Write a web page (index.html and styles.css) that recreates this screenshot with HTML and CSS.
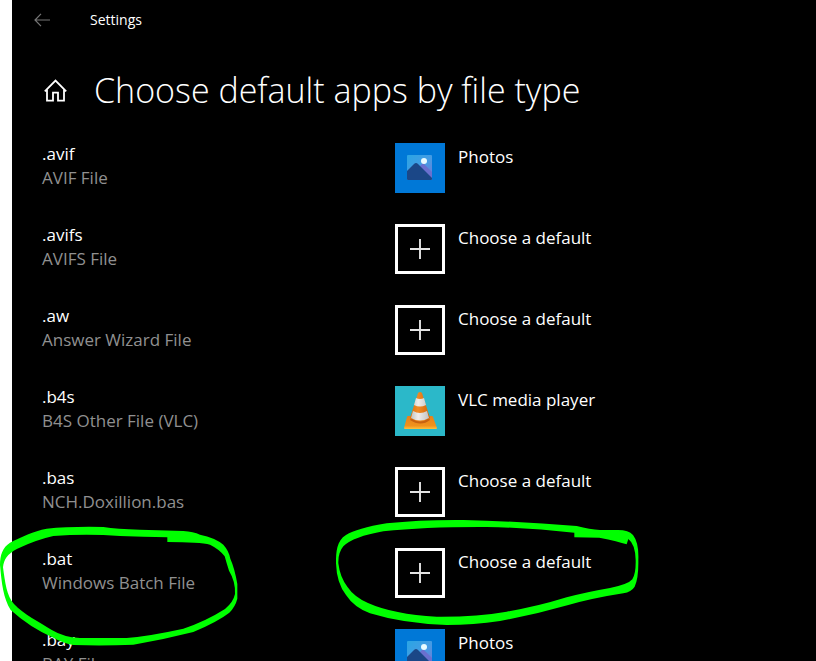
FILE: index.html
```html
<!DOCTYPE html>
<html lang="en">
<head>
<meta charset="utf-8">
<meta name="viewport" content="width=device-width, initial-scale=1">
<title>Settings</title>
<link rel="stylesheet" href="styles.css">
</head>
<body>
<svg class="symbols" aria-hidden="true">
  <defs>
    <linearGradient id="sky" x1="0" y1="0" x2="1" y2="1">
      <stop offset="0" stop-color="#2aa5e4"/><stop offset=".55" stop-color="#469be4"/><stop offset="1" stop-color="#7774d4"/>
    </linearGradient>
    <linearGradient id="cone" x1="0" x2="1">
      <stop offset="0" stop-color="#d9740f"/><stop offset=".4" stop-color="#f08a24"/><stop offset="1" stop-color="#cf6408"/>
    </linearGradient>
    <linearGradient id="band" x1="0" x2="1">
      <stop offset="0" stop-color="#bfc4c4"/><stop offset=".4" stop-color="#f0ece8"/><stop offset="1" stop-color="#c3c3c3"/>
    </linearGradient>
    <linearGradient id="foot" x1="0" y1="0" x2="0" y2="1">
      <stop offset="0" stop-color="#e7811a"/><stop offset=".75" stop-color="#f0921c"/><stop offset="1" stop-color="#ffc03c"/>
    </linearGradient>
    <symbol id="photos" viewBox="0 0 50 50">
      <rect x="12" y="12" width="25" height="25" rx="1" fill="url(#sky)"/>
      <path d="M23 25l4-4q1-1 2 0l8 8v7l-2 1z" fill="#6a70cf"/>
      <path d="M12 28l7-7q2-2 4 0l14 14v1q0 1-1 1H13q-1 0-1-1z" fill="#1b4787"/>
      <circle cx="29" cy="18" r="3" fill="#e9fbff"/>
    </symbol>
    <symbol id="vlc" viewBox="0 0 50 50">
      <path d="M13 30h24q1 0 1 1l4 11q0 1-1 1H10q-1 0-1-1l3-11q0-1 1-1z" fill="url(#foot)"/>
      <path d="M16 32q9 7 18 0l1 2q-9 7-20 0z" fill="#c86210"/>
      <path d="M23 7q2-2 4 0l8 25q-10 5-20 0z" fill="url(#cone)"/>
      <path d="M21 12q4 2 8 0l2 7q-6 3-12 0zM18 25q7 4 14 0l2 7q-9 5-18 0z" fill="url(#band)"/>
    </symbol>
    <symbol id="plus" viewBox="0 0 50 50">
      <path d="M1.5 1.5h47v47h-47z" fill="none" stroke="#fff" stroke-width="3"/>
      <path d="M25 15v20M15 25h20" stroke="#e4e4e4" stroke-width="1.9"/>
    </symbol>
  </defs>
</svg>

<div class="window">
  <header class="titlebar">
    <button class="icon-button back" type="button" aria-label="Back">
      <svg width="16" height="14" viewBox="0 0 16 14"><path d="M7 .8L1 7l6 6.200M1 7h15" fill="none" stroke="currentColor" stroke-width="1.200"/></svg>
    </button>
    <span class="app-name">Settings</span>
  </header>
  <main>
    <div class="heading">
      <button class="icon-button home" type="button" aria-label="Home">
        <svg width="24" height="24" viewBox="0 0 24 24"><path d="M.8 13.300L11.500 2.500l10.700 10.800M3 11.500v11.200h6v-8h5v8h6V11.500" fill="none" stroke="currentColor" stroke-width="1.800"/></svg>
      </button>
      <h1>Choose default apps by file type</h1>
    </div>
    <ul class="types">
      <li class="type"><div class="label"><div class="ext">.avif</div><div class="kind">AVIF File</div></div><button class="app" type="button"><svg class="tile photos"><use href="#photos"/></svg><span>Photos</span></button></li>
      <li class="type"><div class="label"><div class="ext">.avifs</div><div class="kind">AVIFS File</div></div><button class="app" type="button"><svg class="tile"><use href="#plus"/></svg><span>Choose a default</span></button></li>
      <li class="type"><div class="label"><div class="ext">.aw</div><div class="kind">Answer Wizard File</div></div><button class="app" type="button"><svg class="tile"><use href="#plus"/></svg><span>Choose a default</span></button></li>
      <li class="type"><div class="label"><div class="ext">.b4s</div><div class="kind">B4S Other File (VLC)</div></div><button class="app" type="button"><svg class="tile vlc"><use href="#vlc"/></svg><span>VLC media player</span></button></li>
      <li class="type"><div class="label"><div class="ext">.bas</div><div class="kind">NCH.Doxillion.bas</div></div><button class="app" type="button"><svg class="tile"><use href="#plus"/></svg><span>Choose a default</span></button></li>
      <li class="type"><div class="label"><div class="ext">.bat</div><div class="kind">Windows Batch File</div></div><button class="app" type="button"><svg class="tile"><use href="#plus"/></svg><span>Choose a default</span></button></li>
      <li class="type"><div class="label"><div class="ext">.bay</div><div class="kind">BAY File</div></div><button class="app" type="button"><svg class="tile photos"><use href="#photos"/></svg><span>Photos</span></button></li>
    </ul>
  </main>
</div>

<svg class="mark mark-type" viewBox="0 0 750 453" aria-hidden="true">
  <path fill-rule="evenodd" d="M0 165C0 135 8 112 30 98C65 80 100 64 140 56Q210 49 310 51Q350 57 420 59L550 63Q580 65 600 74Q645 83 670 104Q687 123 691 146Q704 175 712 222V266Q706 290 688 308Q655 334 580 366Q490 389 400 404Q310 408 220 405Q190 400 160 383Q90 353 32 300C10 265 5 220 0 165ZM9 172C15 215 20 260 42 282C70 312 120 338 154 359Q190 381 240 384H380Q450 378 550 356Q615 335 675 297Q700 276 705 252Q707 215 687 182Q679 157 674 139Q660 119 630 104Q600 96 502 96V82Q430 80 360 78Q260 71 160 78Q110 89 52 116C20 133 12 148 9 172Z"/>
</svg>
<svg class="mark mark-app" viewBox="0 0 990 453" aria-hidden="true">
  <path fill-rule="evenodd" d="M48 160C48 125 50 92 78 75Q110 55 200 40Q300 29 430 30Q600 34 770 48Q810 58 840 60H890Q925 59 939 75Q957 98 955 150Q956 205 944 230Q934 246 910 250Q820 264 745 285Q640 315 540 333Q460 345 380 345Q250 341 150 310Q102 292 78 255Q50 220 48 160ZM55 160Q60 202 82 230Q102 260 144 279Q220 313 350 320Q470 321 560 305Q650 290 740 262Q800 246 870 234Q925 223 937 208Q948 190 947 150Q946 103 925 87L920 103Q895 94 838 83L763 82V68Q630 53 500 51Q320 50 190 64Q100 80 70 109Q54 128 55 160Z"/>
</svg>
</body>
</html>
```
FILE: styles.css
```css
* { box-sizing: border-box; }

body {
  margin: 0;
  height: 100vh;
  overflow: hidden;
  position: relative;
  background: #fff;
  color: #fff;
  font: 17px/24px "Open Sans", "Noto Sans", sans-serif;
}

.symbols { position: absolute; width: 0; height: 0; }

.window {
  height: 100%;
  margin-left: 12px;
  padding: 0 30px;
  overflow: hidden;
  background: #000;
}

button {
  padding: 0;
  border: 0;
  background: none;
  color: inherit;
  font: inherit;
  text-align: left;
}

.titlebar {
  display: flex;
  align-items: center;
  height: 40px;
  margin-left: -8px;
}

.icon-button { display: flex; flex: none; }
.back { width: 56px; color: #777; }
.app-name { font-size: 14px; }

.heading {
  display: flex;
  align-items: center;
  height: 100px;
  padding-left: 2px;
}

.home { width: 50px; }

h1 {
  margin: 0;
  font-size: 34px;
  font-weight: 300;
  line-height: 48px;
  white-space: nowrap;
}

.types {
  display: grid;
  gap: 30px;
  margin: 2px 0 0;
  padding: 0;
  list-style: none;
}

.type {
  display: grid;
  grid-template-columns: 353px 1fr;
  align-items: start;
}

.kind { color: #909090; }

.app {
  display: flex;
  align-items: flex-start;
  gap: 13px;
  padding-top: 1px;
}

.app span { padding-top: 2px; }

.tile { flex: none; width: 50px; height: 50px; }
.photos { background: #0078d7; }
.vlc { background: #2bb8c9; }

.mark { position: absolute; fill: #0f0; pointer-events: none; }
.mark-type { left: 0; top: 510px; width: 250px; height: 151px; }
.mark-app { left: 320px; top: 510px; width: 330px; height: 151px; }
```
